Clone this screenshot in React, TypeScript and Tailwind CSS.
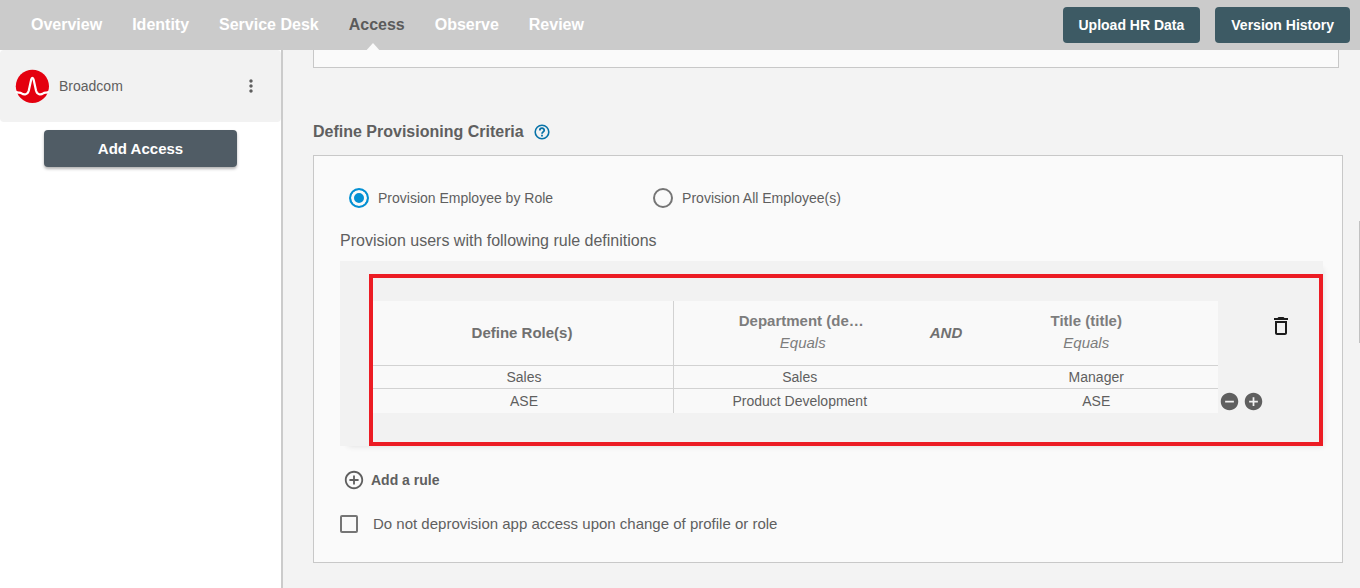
import React from 'react'
import { MdAddCircle, MdAddCircleOutline, MdDeleteOutline, MdMoreVert, MdRemoveCircle } from 'react-icons/md'

const tabs = ['Overview', 'Identity', 'Service Desk', 'Access', 'Observe', 'Review']

const rules = [
  { role: 'Sales', department: 'Sales', title: 'Manager' },
  { role: 'ASE', department: 'Product Development', title: 'ASE' },
]

function Header() {
  return (
    <header className="flex h-[50px] items-center justify-between bg-[#cbcbcb] pr-[10px] pl-[31px]">
      <nav className="flex h-full gap-[30px] text-base font-bold">
        {tabs.map((tab) => (
          <a
            key={tab}
            href="#"
            className={`relative flex h-full items-center whitespace-nowrap ${
              tab === 'Access' ? 'text-[#5b5b5b]' : 'text-white'
            }`}
          >
            {tab}
            {tab === 'Access' && (
              <svg
                className="absolute bottom-0 left-[17px] text-[#fafafa]"
                width="14"
                height="7"
                viewBox="0 0 14 7"
                fill="currentColor"
              >
                <path d="M0.7 7 L7 0 L13.3 7 Z" />
              </svg>
            )}
          </a>
        ))}
      </nav>
      <div className="flex gap-[15px] text-sm font-bold text-white">
        <button className="h-9 rounded bg-[#3d5a64] px-4">Upload HR Data</button>
        <button className="h-9 rounded bg-[#3d5a64] px-4">Version History</button>
      </div>
    </header>
  )
}

function BroadcomLogo() {
  return (
    <svg width="34" height="34" viewBox="0 0 34 34" fill="none" aria-hidden="true">
      <circle cx="17.4" cy="17.3" r="16.6" fill="#e4000f" />
      <path
        d="M0.8 22.6 C3 24.6 4.6 22.6 6.6 24.4 C9 26.2 12.8 25.8 13.8 21.6 L16.2 10.4 C16.7 8.2 18.1 8.2 18.6 10.4 L21 21.6 C22 25.8 25.8 26.2 28.2 24.4 C30.2 22.6 31.8 24.6 34 22.6"
        stroke="#fff"
        strokeWidth="2.2"
      />
    </svg>
  )
}

function HelpIcon() {
  return (
    <svg width="18" height="18" viewBox="0 0 18 18" fill="none" stroke="currentColor" aria-hidden="true">
      <circle cx="9" cy="9" r="6.8" strokeWidth="1.6" />
      <path d="M6.8 7.4 C6.8 4.5 11.2 4.5 11.2 7.2 C11.2 8.8 9 8.9 9 10.8" strokeWidth="1.8" />
      <path d="M9 11.7 V13.4" strokeWidth="1.8" />
    </svg>
  )
}

function Sidebar() {
  return (
    <aside className="w-[283px] shrink-0 border-r-2 border-[#cbcbcb] bg-white">
      <div className="flex h-[72px] items-center rounded bg-[#f2f2f2] pr-5 pl-[15px]">
        <BroadcomLogo />
        <span className="ml-[10px] text-sm">Broadcom</span>
        <button className="ml-auto" aria-label="More options">
          <MdMoreVert size={20} />
        </button>
      </div>
      <div className="px-11 pt-2">
        <button className="h-[37px] w-full rounded bg-[#505c65] pt-0.5 text-[15px] font-bold text-white shadow-[0_2px_3px_rgba(0,0,0,0.3)]">
          Add Access
        </button>
      </div>
    </aside>
  )
}

function Radio({ label, defaultChecked }: { label: string; defaultChecked?: boolean }) {
  return (
    <label className="flex h-5 items-center gap-[9px] text-sm">
      <input
        type="radio"
        name="provision"
        defaultChecked={defaultChecked}
        className="size-5 appearance-none rounded-full border-2 border-[#757575] checked:border-[#0490d3] checked:bg-[#0490d3] checked:shadow-[inset_0_0_0_3px_#fafafa]"
      />
      {label}
    </label>
  )
}

function RuleTable() {
  return (
    <table className="w-full table-fixed border-separate border-spacing-0 bg-[#f9f9f9] text-center">
      <colgroup>
        <col className="w-[301px]" />
        <col />
        <col className="w-[49px]" />
        <col />
      </colgroup>
      <thead className="text-[15px] text-[#7d7d7d]">
        <tr className="h-[65px]">
          <th className="border-r border-b border-[#d2d2d2] p-0 pr-0.5 text-[#707070]">Define Role(s)</th>
          <th className="border-b border-[#d2d2d2] p-0 pb-0.5">
            <div className="ml-[10px] leading-[22px]">
              <div className="mx-auto w-[128px] text-left">Department (de…</div>
              <div className="font-normal italic">Equals</div>
            </div>
          </th>
          <th className="border-b border-[#d2d2d2] p-0 text-[#707070] italic">AND</th>
          <th className="border-b border-[#d2d2d2] p-0 pb-0.5">
            <div className="mr-4 leading-[22px]">
              <div>Title (title)</div>
              <div className="font-normal italic">Equals</div>
            </div>
          </th>
        </tr>
      </thead>
      <tbody className="text-sm">
        {rules.map((rule) => (
          <tr key={rule.title} className="group h-[23px] last:h-6">
            <td className="border-r border-b border-[#d2d2d2] p-0 pl-0.5 group-last:border-b-0">{rule.role}</td>
            <td className="border-b border-[#d2d2d2] p-0 pl-1 group-last:border-b-0">{rule.department}</td>
            <td className="border-b border-[#d2d2d2] p-0 group-last:border-b-0"></td>
            <td className="border-b border-[#d2d2d2] p-0 pl-1 group-last:border-b-0">{rule.title}</td>
          </tr>
        ))}
      </tbody>
    </table>
  )
}

function RuleCard() {
  return (
    <div className="mt-2 bg-[#f2f2f2] pt-[13px] pl-[29px] shadow-[4px_4px_6px_-4px_rgba(0,0,0,0.12)]">
      <div className="flex border-4 border-[#ec1c24] pt-[23px] pb-[29px]">
        <div className="min-w-0 flex-1">
          <RuleTable />
        </div>
        <div className="flex w-[101px] flex-col justify-between pt-[13px] pb-px">
          <button className="mr-[26px] self-end text-[#1c1c1c]" aria-label="Delete rule">
            <MdDeleteOutline size={24} />
          </button>
          <div className="flex gap-[3px] pl-px">
            <button aria-label="Remove row">
              <MdRemoveCircle size={21} />
            </button>
            <button aria-label="Add row">
              <MdAddCircle size={21} />
            </button>
          </div>
        </div>
      </div>
    </div>
  )
}

export default function App() {
  return (
    <div className="flex min-h-screen flex-col font-['Liberation_Sans',Arial,sans-serif] text-[#5f5f5f]">
      <Header />
      <div className="flex flex-1">
        <Sidebar />
        <main className="relative min-w-0 flex-1 bg-[#f3f3f3] pr-[17px] pl-[30px]">
          <div className="mr-1 h-[18px] border-x border-b border-[#c8c8c8] bg-[#fafafa]" />

          <div className="mt-[52px] mb-[11px] flex items-center gap-[9px]">
            <h2 className="text-base leading-6 font-bold">Define Provisioning Criteria</h2>
            <button className="text-[#0873a8]" aria-label="Help">
              <HelpIcon />
            </button>
          </div>

          <section className="border border-[#c8c8c8] bg-[#fafafa] pt-8 pr-[19px] pb-[26px] pl-[26px]">
            <div className="flex gap-[100px] pl-[9px]">
              <Radio label="Provision Employee by Role" defaultChecked />
              <Radio label="Provision All Employee(s)" />
            </div>
            <p className="mt-[21px] text-base leading-6">Provision users with following rule definitions</p>

            <RuleCard />

            <button className="mt-[22px] ml-[3px] flex h-6 items-center gap-1.5 text-sm font-bold">
              <MdAddCircleOutline size={22} />
              Add a rule
            </button>
            <label className="mt-5 flex items-center gap-[15px] text-[15px] leading-6">
              <input
                type="checkbox"
                className="size-[18px] appearance-none rounded-xs border-2 border-[#757575] checked:bg-[#757575]"
              />
              Do not deprovision app access upon change of profile or role
            </label>
          </section>

          {/* Scroll thumb */}
          <div className="absolute top-[171px] right-0 h-[122px] w-px bg-[#c1c1c1]" />
        </main>
      </div>
    </div>
  )
}
